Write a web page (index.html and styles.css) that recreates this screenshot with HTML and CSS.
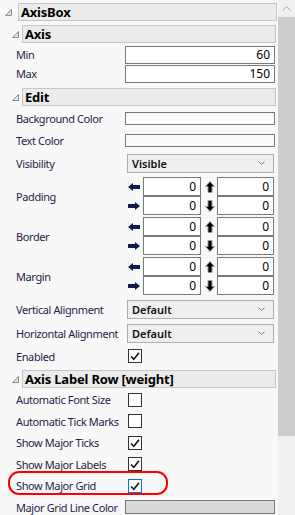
FILE: index.html
```html
<!DOCTYPE html>
<html lang="en">
<head>
  <meta charset="UTF-8">
  <title>AxisBox</title>
  <link rel="stylesheet" href="styles.css">
</head>
<body>

  <div class="window">
    <div class="panel">

      <div class="hdr hdr-top">
        <svg class="tri" width="7" height="7" viewBox="0 0 7 7"><polygon points="6.5,0.5 6.5,6.5 0.5,6.5" /></svg>
        <div class="hdr-box">AxisBox</div>
      </div>

      <div class="hdr hdr-sub">
        <svg class="tri" width="7" height="7" viewBox="0 0 7 7"><polygon points="6.5,0.5 6.5,6.5 0.5,6.5" /></svg>
        <div class="hdr-box">Axis</div>
      </div>
      <div class="row row-num">
        <span class="label">Min</span>
        <div class="num num-wide">60</div>
      </div>
      <div class="row row-num">
        <span class="label">Max</span>
        <div class="num num-wide">150</div>
      </div>

      <div class="hdr hdr-sub hdr-edit">
        <svg class="tri" width="7" height="7" viewBox="0 0 7 7"><polygon points="6.5,0.5 6.5,6.5 0.5,6.5" /></svg>
        <div class="hdr-box">Edit</div>
      </div>
      <div class="row row-color">
        <span class="label">Background Color</span>
        <div class="swatch"></div>
      </div>
      <div class="row row-color">
        <span class="label">Text Color</span>
        <div class="swatch"></div>
      </div>
      <div class="row row-sel">
        <span class="label">Visibility</span>
        <div class="select">Visible<svg class="chev" width="7" height="4" viewBox="0 0 7 4"><polyline points="0.5,0.5 3.5,3.5 6.5,0.5" /></svg></div>
      </div>

      <div class="row quad">
        <span class="label">Padding</span>
        <div class="quad-grid">
          <svg class="arrow-h" width="12" height="8" viewBox="0 0 12 8"><polygon points="0,4 5,0 5,2 12,2 12,6 5,6 5,8" /></svg>
          <div class="num num-a">0</div>
          <svg class="arrow-v" width="10" height="12" viewBox="0 0 10 12"><polygon points="5,0.5 9.5,5.5 7,5.5 7,11.5 3,11.5 3,5.5 0.5,5.5" /></svg>
          <div class="num num-b">0</div>
          <svg class="arrow-h" width="12" height="8" viewBox="0 0 12 8"><polygon points="12,4 7,0 7,2 0,2 0,6 7,6 7,8" /></svg>
          <div class="num num-a">0</div>
          <svg class="arrow-v" width="10" height="12" viewBox="0 0 10 12"><polygon points="5,11.5 9.5,6.5 7,6.5 7,0.5 3,0.5 3,6.5 0.5,6.5" /></svg>
          <div class="num num-b">0</div>
        </div>
      </div>

      <div class="row quad">
        <span class="label">Border</span>
        <div class="quad-grid">
          <svg class="arrow-h" width="12" height="8" viewBox="0 0 12 8"><polygon points="0,4 5,0 5,2 12,2 12,6 5,6 5,8" /></svg>
          <div class="num num-a">0</div>
          <svg class="arrow-v" width="10" height="12" viewBox="0 0 10 12"><polygon points="5,0.5 9.5,5.5 7,5.5 7,11.5 3,11.5 3,5.5 0.5,5.5" /></svg>
          <div class="num num-b">0</div>
          <svg class="arrow-h" width="12" height="8" viewBox="0 0 12 8"><polygon points="12,4 7,0 7,2 0,2 0,6 7,6 7,8" /></svg>
          <div class="num num-a">0</div>
          <svg class="arrow-v" width="10" height="12" viewBox="0 0 10 12"><polygon points="5,11.5 9.5,6.5 7,6.5 7,0.5 3,0.5 3,6.5 0.5,6.5" /></svg>
          <div class="num num-b">0</div>
        </div>
      </div>

      <div class="row quad">
        <span class="label">Margin</span>
        <div class="quad-grid">
          <svg class="arrow-h" width="12" height="8" viewBox="0 0 12 8"><polygon points="0,4 5,0 5,2 12,2 12,6 5,6 5,8" /></svg>
          <div class="num num-a">0</div>
          <svg class="arrow-v" width="10" height="12" viewBox="0 0 10 12"><polygon points="5,0.5 9.5,5.5 7,5.5 7,11.5 3,11.5 3,5.5 0.5,5.5" /></svg>
          <div class="num num-b">0</div>
          <svg class="arrow-h" width="12" height="8" viewBox="0 0 12 8"><polygon points="12,4 7,0 7,2 0,2 0,6 7,6 7,8" /></svg>
          <div class="num num-a">0</div>
          <svg class="arrow-v" width="10" height="12" viewBox="0 0 10 12"><polygon points="5,11.5 9.5,6.5 7,6.5 7,0.5 3,0.5 3,6.5 0.5,6.5" /></svg>
          <div class="num num-b">0</div>
        </div>
      </div>

      <div class="row row-sel row-valign">
        <span class="label">Vertical Alignment</span>
        <div class="select">Default<svg class="chev" width="7" height="4" viewBox="0 0 7 4"><polyline points="0.5,0.5 3.5,3.5 6.5,0.5" /></svg></div>
      </div>
      <div class="row row-sel">
        <span class="label">Horizontal Alignment</span>
        <div class="select">Default<svg class="chev" width="7" height="4" viewBox="0 0 7 4"><polyline points="0.5,0.5 3.5,3.5 6.5,0.5" /></svg></div>
      </div>
      <div class="row row-check row-enabled">
        <span class="label">Enabled</span>
        <div class="check"><svg width="12" height="12" viewBox="0 0 12 12"><polyline points="2,6.5 4.8,9.3 10,2.8" /></svg></div>
      </div>

      <div class="hdr hdr-sub hdr-label">
        <svg class="tri" width="7" height="7" viewBox="0 0 7 7"><polygon points="6.5,0.5 6.5,6.5 0.5,6.5" /></svg>
        <div class="hdr-box">Axis Label Row [weight]</div>
      </div>
      <div class="row row-check">
        <span class="label">Automatic Font Size</span>
        <div class="check"></div>
      </div>
      <div class="row row-check">
        <span class="label">Automatic Tick Marks</span>
        <div class="check"></div>
      </div>
      <div class="row row-check">
        <span class="label">Show Major Ticks</span>
        <div class="check"><svg width="12" height="12" viewBox="0 0 12 12"><polyline points="2,6.5 4.8,9.3 10,2.8" /></svg></div>
      </div>
      <div class="row row-check">
        <span class="label">Show Major Labels</span>
        <div class="check"><svg width="12" height="12" viewBox="0 0 12 12"><polyline points="2,6.5 4.8,9.3 10,2.8" /></svg></div>
      </div>
      <div class="row row-check highlighted">
        <span class="label">Show Major Grid</span>
        <div class="check check-focus"><svg width="12" height="12" viewBox="0 0 12 12"><polyline points="2,6.5 4.8,9.3 10,2.8" /></svg></div>
        <div class="ring"></div>
      </div>
      <div class="row row-check">
        <span class="label">Major Grid Line Color</span>
        <div class="swatch swatch-grey"></div>
      </div>

    </div>

    <div class="scrollbar">
      <div class="sb-btn"><svg width="9" height="5" viewBox="0 0 9 5"><polyline points="0.5,4.5 4.5,0.5 8.5,4.5" /></svg></div>
      <div class="sb-thumb"></div>
    </div>
  </div>

</body>
</html>
```

FILE: styles.css
```css
* {
  box-sizing: border-box;
}

body {
  margin: 0;
  background: #f8f8f8;
  font-family: 'Noto Sans', 'Open Sans', sans-serif;
  font-size: 11px;
  color: #1e1e46;
}

.window {
  display: flex;
  height: 515px;
  overflow: hidden;
}

.panel {
  flex: 1;
  display: flex;
  flex-direction: column;
  padding-top: 3px;
}

/* section headers */

.hdr {
  display: flex;
  align-items: center;
  height: 18px;
  flex-shrink: 0;
}

.hdr-top {
  padding-left: 5px;
  gap: 6px;
  margin-right: 1px;
}

.hdr-sub {
  padding-left: 12px;
  gap: 3px;
  margin-right: 2px;
  margin-top: 4px;
}

.hdr-edit {
  margin-top: 5px;
}

.hdr-label {
  margin-top: 3px;
  margin-bottom: 1px;
}

.tri {
  flex-shrink: 0;
}

.tri polygon {
  fill: #e4e4e4;
  stroke: #8c8c8c;
  stroke-width: 1;
}

.hdr-box {
  flex: 1;
  height: 18px;
  background: #ebebeb;
  border: 1px solid #c6c6c6;
  padding-left: 2px;
  font-size: 13px;
  font-weight: bold;
  line-height: 16px;
  color: #000;
  letter-spacing: -0.2px;
}

/* property rows */

.row {
  display: flex;
  align-items: center;
  padding-left: 16px;
  flex-shrink: 0;
  position: relative;
}

.label {
  width: 109px;
  flex-shrink: 0;
  white-space: nowrap;
  letter-spacing: -0.4px;
}

.row-num {
  height: 19px;
  align-items: flex-end;
}

.row-num .label {
  align-self: center;
}

.hdr-sub + .row-num {
  margin-top: 2px;
}

.row-color {
  height: 22px;
}

.hdr-edit + .row-color {
  margin-top: 1px;
}

.row-sel {
  height: 24px;
}

.row-valign {
  margin-top: 2px;
}

.row-check {
  height: 21.5px;
}

.row-enabled {
  height: 22px;
}

.num {
  height: 18px;
  background: #fff;
  border: 1px solid #7a7a7a;
  text-align: right;
  padding-right: 4px;
  line-height: 16px;
  color: #000;
  font-size: 12px;
}

.num-wide {
  width: 150px;
}

.swatch {
  width: 150px;
  height: 13px;
  border: 1px solid #7a7a7a;
  background: #fafafa;
}

.swatch-grey {
  height: 14px;
  background: #d9d9d9;
}

.select {
  width: 147px;
  height: 19px;
  margin-left: 2px;
  background: #efefef;
  border: 1px solid #adadad;
  padding: 0 8px 0 4px;
  display: flex;
  align-items: center;
  justify-content: space-between;
  font-weight: 600;
  color: #111;
}

.chev polyline {
  fill: none;
  stroke: #7a7a7a;
  stroke-width: 1;
}

/* padding / border / margin */

.quad {
  margin-top: 2px;
}

.quad-grid {
  display: grid;
  grid-template-columns: 12px 58px 10px 57px;
  grid-auto-rows: 19px;
  column-gap: 3px;
  align-items: center;
  margin-left: 3px;
}

.quad-grid .num {
  height: 19px;
  line-height: 17px;
}

.quad-grid .arrow-v {
  margin-left: 1px;
}

.arrow-h polygon {
  fill: #0f1b4a;
}

.arrow-v polygon {
  fill: #000;
  stroke: #9a9a9a;
  stroke-width: 1;
}

/* checkboxes */

.check {
  width: 14px;
  height: 14px;
  margin-left: 3px;
  background: #fff;
  border: 1px solid #333;
  display: flex;
  align-items: center;
  justify-content: center;
}

.check polyline {
  fill: none;
  stroke: #1a1a1a;
  stroke-width: 1.7;
}

.check-focus {
  border-color: #0078d7;
}

.ring {
  position: absolute;
  left: 8px;
  top: -4px;
  width: 160px;
  height: 24px;
  border: 2px solid #ff0000;
  border-radius: 11px;
}

/* scrollbar */

.scrollbar {
  width: 17px;
  flex-shrink: 0;
  background: #f0f0f0;
  display: flex;
  flex-direction: column;
}

.sb-btn {
  height: 17px;
  display: flex;
  align-items: center;
  justify-content: center;
}

.sb-btn polyline {
  fill: none;
  stroke: #a3a3a3;
  stroke-width: 1;
}

.sb-thumb {
  height: 419px;
  background: #cdcdcd;
}
```
